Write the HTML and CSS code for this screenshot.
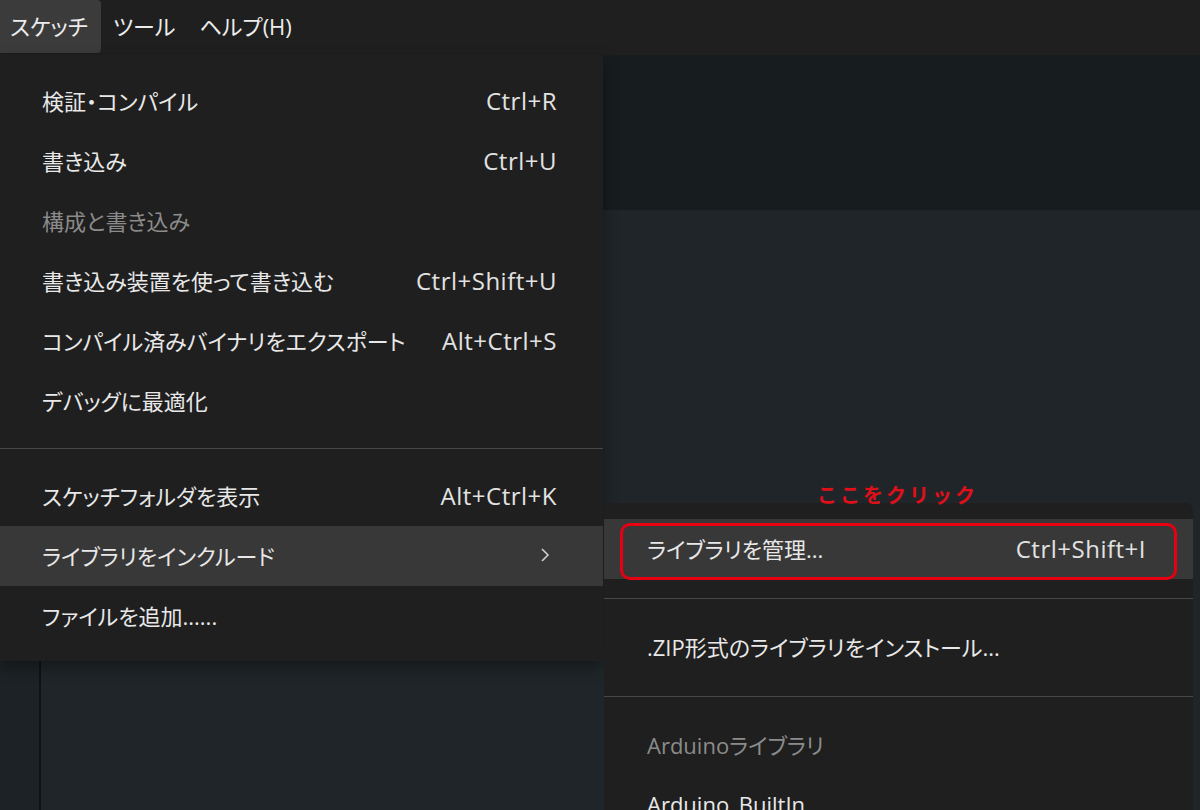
FILE: index.html
```html
<!DOCTYPE html>
<html lang="ja">
<head>
  <meta charset="UTF-8">
  <title>Arduino IDE - スケッチ</title>
  <link rel="stylesheet" href="styles.css">
</head>
<body>
  <div class="menubar">
    <span class="menubar-item active">スケッチ</span>
    <span class="menubar-item">ツール</span>
    <span class="menubar-item">ヘルプ(H)</span>
  </div>
  <div class="workspace">
    <div class="toolbar"></div>
    <div class="main">
      <div class="sidebar"></div>
      <div class="editor"></div>
    </div>

    <div class="menu main-menu">
      <div class="menu-item"><span>検証・コンパイル</span><span class="shortcut">Ctrl+R</span></div>
      <div class="menu-item"><span>書き込み</span><span class="shortcut">Ctrl+U</span></div>
      <div class="menu-item disabled"><span>構成と書き込み</span></div>
      <div class="menu-item"><span>書き込み装置を使って書き込む</span><span class="shortcut">Ctrl+Shift+U</span></div>
      <div class="menu-item"><span>コンパイル済みバイナリをエクスポート</span><span class="shortcut">Alt+Ctrl+S</span></div>
      <div class="menu-item"><span>デバッグに最適化</span></div>
      <div class="separator"></div>
      <div class="menu-item"><span>スケッチフォルダを表示</span><span class="shortcut">Alt+Ctrl+K</span></div>
      <div class="menu-item selected">
        <span>ライブラリをインクルード</span>
        <svg class="chevron" width="10" height="16" viewBox="0 0 10 16"><polyline points="2,2 8,8 2,14" fill="none" stroke="#cfcfcf" stroke-width="1.6"/></svg>
      </div>
      <div class="menu-item"><span>ファイルを追加......</span></div>
    </div>

    <div class="menu submenu">
      <div class="menu-item selected">
        <span>ライブラリを管理...</span><span class="shortcut">Ctrl+Shift+I</span>
        <div class="highlight-box"></div>
      </div>
      <div class="separator"></div>
      <div class="menu-item"><span>.ZIP形式のライブラリをインストール...</span></div>
      <div class="separator"></div>
      <div class="menu-item disabled"><span>Arduinoライブラリ</span></div>
      <div class="menu-item"><span>Arduino_BuiltIn</span></div>
    </div>

    <div class="callout">ここをクリック</div>
  </div>
</body>
</html>
```

FILE: styles.css
```css
* {
  box-sizing: border-box;
  margin: 0;
  padding: 0;
}
body {
  width: 1200px;
  height: 810px;
  overflow: hidden;
  background: #1f1f1f;
  font-family: "Open Sans", "Noto Sans CJK JP", sans-serif;
  font-feature-settings: "palt";
  color: #e8e8e8;
}
.menubar {
  height: 55px;
  display: flex;
  align-items: flex-start;
  background: #1f1f1f;
  font-size: 22px;
  white-space: nowrap;
}
.menubar-item {
  height: 53px;
  display: flex;
  align-items: center;
  padding: 0 12px 4px 12px;
  color: #ececec;
}
.menubar-item.active {
  width: 101px;
  padding-left: 10px;
  background: #3b3b3b;
  border-radius: 0 4px 4px 0;
}
.workspace {
  position: relative;
  height: 755px;
  display: flex;
  flex-direction: column;
}
.toolbar {
  height: 155px;
  background: #171c1f;
}
.main {
  flex: 1;
  display: flex;
}
.sidebar {
  width: 41px;
  background: #1c2225;
  border-right: 2px solid #0f1315;
}
.editor {
  flex: 1;
  background: #1f2528;
}
.menu {
  position: absolute;
  background: #1f1f1f;
  font-size: 22px;
}
.main-menu {
  top: 0;
  left: 0;
  width: 603px;
  padding: 16px 0 15px;
  box-shadow: 0 6px 14px rgba(0, 0, 0, 0.35);
}
.submenu {
  top: 448px;
  left: 604px;
  width: 589px;
  padding: 16px 0 0;
  height: 320px;
  border-radius: 0 8px 0 0;
}
.menu-item {
  position: relative;
  height: 60px;
  display: flex;
  align-items: center;
  justify-content: space-between;
  padding: 0 46px 2px 42px;
  white-space: nowrap;
}
.submenu .menu-item {
  padding: 0 47px 2px 43px;
}
.menu-item.selected {
  background: #383838;
}
.menu-item.disabled {
  color: #8b8b8b;
}
.shortcut {
  color: #e2e2e2;
  font-size: 24px;
  letter-spacing: 0.5px;
}
.chevron {
  margin-right: 7px;
}
.separator {
  height: 35px;
  display: flex;
  align-items: center;
}
.separator::after {
  content: "";
  flex: 1;
  height: 1px;
  background: #474747;
}
.submenu .separator {
  height: 38px;
}
.highlight-box {
  position: absolute;
  top: 4px;
  left: 16px;
  right: 16px;
  bottom: -1px;
  border: 3px solid #e60012;
  border-radius: 10px;
}
.callout {
  position: absolute;
  top: 425px;
  left: 817px;
  font-family: "Noto Sans CJK JP", sans-serif;
  font-feature-settings: normal;
  color: #e0101a;
  font-size: 20px;
  font-weight: bold;
  letter-spacing: 3px;
}
```
